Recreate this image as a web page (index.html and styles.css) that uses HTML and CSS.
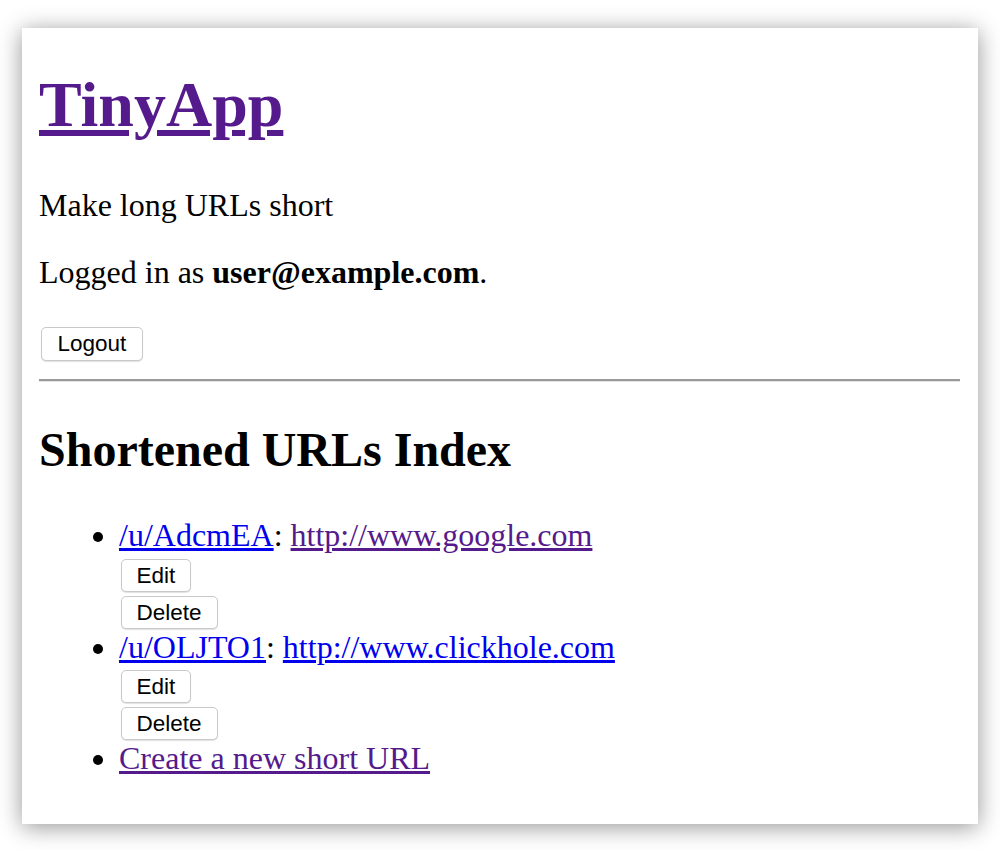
FILE: index.html
```html
<!DOCTYPE html>
<html lang="en">
<head>
<meta charset="utf-8">
<title>TinyApp</title>
<link rel="stylesheet" href="styles.css">
</head>
<body>
<div class="window">
  <h1 class="title"><a href="#" class="link visited">TinyApp</a></h1>
  <p class="tagline">Make long URLs short</p>
  <p class="status">Logged in as <b>user@example.com</b>.</p>
  <form class="form logout-form"><button type="button" class="btn">Logout</button></form>
  <hr class="rule">
  <h2 class="heading">Shortened URLs Index</h2>
  <ul class="list">
    <li class="item">
      <div class="line"><a href="#" class="link">/u/AdcmEA</a>: <a href="#" class="link visited">http://www.google.com</a></div>
      <form class="form"><button type="button" class="btn">Edit</button></form>
      <form class="form"><button type="button" class="btn">Delete</button></form>
    </li>
    <li class="item">
      <div class="line"><a href="#" class="link">/u/OLJTO1</a>: <a href="#" class="link">http://www.clickhole.com</a></div>
      <form class="form"><button type="button" class="btn">Edit</button></form>
      <form class="form"><button type="button" class="btn">Delete</button></form>
    </li>
    <li class="item">
      <div class="line"><a href="#" class="link visited">Create a new short URL</a></div>
    </li>
  </ul>
</div>
</body>
</html>
```

FILE: styles.css
```css
html, body {
  margin: 0;
  padding: 0;
  background: #ffffff;
}

body {
  font-family: "Liberation Serif", "Times New Roman", serif;
  color: #000;
  padding: 28px 0 26px 22px;
}

.window {
  box-sizing: border-box;
  width: 956px;
  height: 796px;
  padding: 1px 18px 0 17px;
  background: #fff;
  box-shadow: 0 3px 22px rgba(0, 0, 0, 0.42);
  overflow: hidden;
  font-size: 32px;
  line-height: 37.2px;
}

.link {
  color: #0000ee;
  text-decoration: underline;
}

.link.visited {
  color: #551a8b;
}

.title {
  font-size: 64px;
  line-height: 74px;
  font-weight: bold;
  margin: 39px 0 0;
}

.tagline {
  margin: 45px 0 0;
  line-height: 37px;
}

.status {
  margin: 30px 0 0;
  line-height: 37px;
}

.status b {
  font-weight: bold;
}

.form {
  display: block;
  box-sizing: border-box;
  margin: 0;
  height: 37.2px;
  padding-top: 4.3px;
}

.logout-form {
  margin-top: 32px;
}

.btn {
  display: block;
  box-sizing: border-box;
  height: 33px;
  margin: 0 0 0 1.5px;
  padding: 3px 15px;
  font-family: "Liberation Sans", Arial, Helvetica, sans-serif;
  font-size: 22.5px;
  line-height: 25px;
  color: #000;
  background: #fff;
  border: 1px solid #c9c9c9;
  border-radius: 5px;
  box-shadow: 0 1px 1px rgba(0, 0, 0, 0.12);
}

.logout-form .btn {
  height: 34px;
  padding: 3px 16px 4px;
}

.rule {
  margin: 19px 0 0;
  height: 0;
  border: 0;
  border-top: 2px solid #9a9a9a;
  border-bottom: 1px solid #e4e4e4;
}

.heading {
  font-size: 48px;
  line-height: 55px;
  font-weight: bold;
  margin: 40px 0 0;
}

.list {
  margin: 40px 0 0;
  padding: 0 0 0 80px;
  list-style: disc;
}

.item {
  line-height: 37.2px;
}

.line {
  height: 37.2px;
}
```
